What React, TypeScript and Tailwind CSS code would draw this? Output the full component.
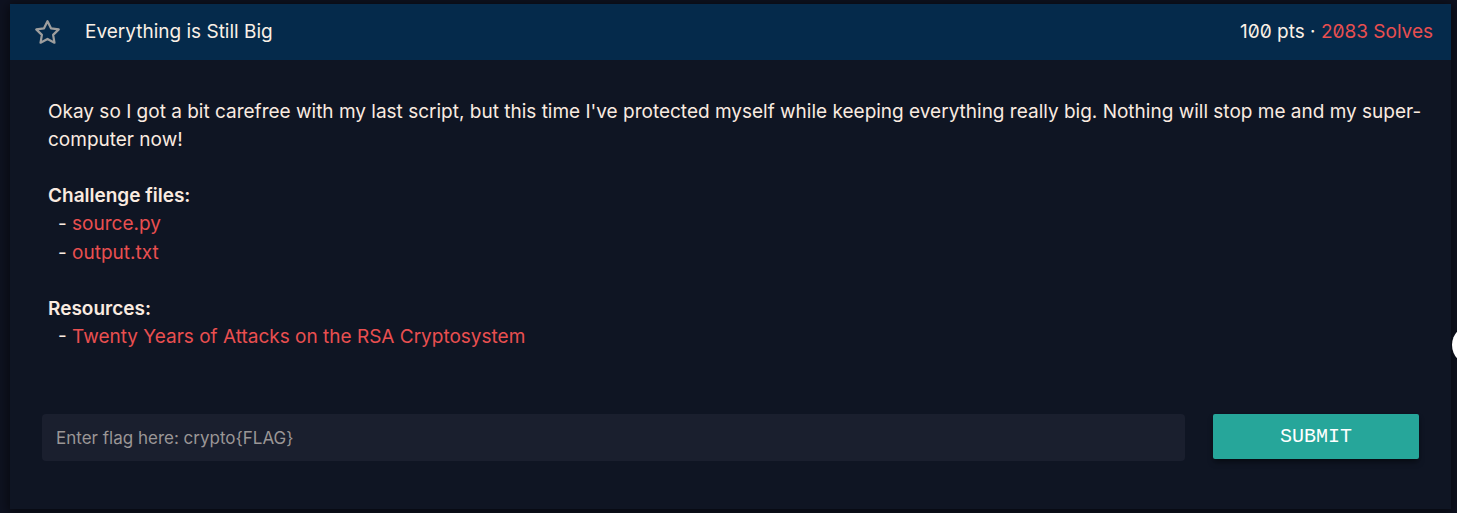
import { FiStar } from "react-icons/fi";

const files = ["source.py", "output.txt"];

function DashLink({ label }: { label: string }) {
  return (
    <li className="pl-2.5">
      - <a href="#" className="text-[#e94f50]">{label}</a>
    </li>
  );
}

export default function App() {
  return (
    <main className="relative min-h-screen overflow-hidden bg-[#0e1220] pt-1 pr-1.5 pb-[5px] pl-2.5 font-['Inter',sans-serif] text-[19px] leading-7 text-[#faebe0]">
      <article className="bg-[#0f1523] shadow-[0_2px_10px_2px_rgba(0,0,0,0.5)]">
        <header className="flex h-14 items-center bg-[#052a4b] pr-[18px] pl-6">
          <button type="button" aria-label="Bookmark challenge" className="text-[#9e9e9e]">
            <FiStar className="size-[27px]" />
          </button>
          <h1 className="ml-6 text-[#faf0e6]">Everything is Still Big</h1>
          <p className="ml-auto text-[#faf0e6] [font-feature-settings:'zero']">
            100 pts · <a href="#" className="text-[#e94f50]">2083 Solves</a>
          </p>
        </header>
        <section className="pt-[38px] pb-12">
          <div className="pr-6 pl-[38px]">
            <p>
              Okay so I got a bit carefree with my last script, but this time I've protected myself
              while keeping everything really big. Nothing will stop me and my super-computer now!
            </p>
            <h2 className="mt-7 font-semibold">Challenge files:</h2>
            <ul className="flex flex-col gap-px">
              {files.map((file) => (
                <DashLink key={file} label={file} />
              ))}
            </ul>
            <h2 className="mt-7 font-semibold">Resources:</h2>
            <ul className="flex flex-col gap-px">
              <DashLink label="Twenty Years of Attacks on the RSA Cryptosystem" />
            </ul>
          </div>
          <form className="mt-[63px] flex items-start gap-7 px-8" onSubmit={(e) => e.preventDefault()}>
            <input
              type="text"
              aria-label="Flag"
              placeholder="Enter flag here: crypto{FLAG}"
              className="h-[47px] min-w-0 flex-1 rounded-sm bg-[#1a1f2e] px-3.5 text-[17px] outline-none placeholder:text-[#9a9696]"
            />
            <button
              type="submit"
              className="h-[45px] w-[206px] rounded-xs bg-[#26a69a] font-['Liberation_Mono',monospace] text-[20px] text-white shadow-md shadow-black/40"
            >
              SUBMIT
            </button>
          </form>
        </section>
      </article>
      <button
        type="button"
        aria-label="Open panel"
        className="absolute top-[325px] -right-[35px] size-10 rounded-full bg-white"
      />
    </main>
  );
}
